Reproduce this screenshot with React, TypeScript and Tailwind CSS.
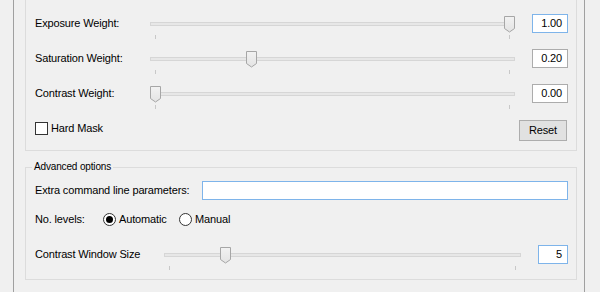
export default function App() {
  return (
    <div className="w-[600px] h-[292px] overflow-hidden bg-[#f0f0f0] font-['Liberation_Sans',Arial,sans-serif] text-[11px] tracking-[-0.15px] text-black">
      <div className="ml-[13px] w-[572px] h-full border-x border-[#a0a0a0] pl-[11px] pr-[7px]">
        {/* blending weights group, top edge scrolled out of view */}
        <div className="border-x border-b border-[#dcdcdc] pl-[9px] pr-[8px] pt-[14px] pb-[9px]">
          <WeightRow label="Exposure Weight:" value="1.00" left={354} focused />
          <WeightRow label="Saturation Weight:" value="0.20" left={96} />
          <WeightRow label="Contrast Weight:" value="0.00" left={0} />
          <div className="flex items-start h-[22px]">
            <div className="flex items-center mt-[3px]">
              <div className="w-[13px] h-[13px] border border-[#333333] bg-white" />
              <span className="ml-[3px] leading-[13px]">Hard Mask</span>
            </div>
            <button className="ml-auto mr-[1px] mt-[1px] w-[48px] h-[21px] border border-[#adadad] bg-[#e1e1e1] leading-[19px] text-center">
              Reset
            </button>
          </div>
        </div>

        <div className="relative mt-[16px] border border-[#dcdcdc] pl-[9px] pr-[8px] pt-[13px] pb-[15px]">
          <span className="absolute -top-[8px] left-[6px] px-[2px] bg-[#f0f0f0] text-[10px] leading-[13px]">
            Advanced options
          </span>

          <div className="flex items-center h-[19px]">
            <span className="w-[167px] leading-[19px]">Extra command line parameters:</span>
            <div className="flex-1 h-[19px] border border-[#7eb4ea] bg-white" />
          </div>

          <div className="flex items-center h-[19px] mt-[10px]">
            <span className="w-[68px] leading-[19px]">No. levels:</span>
            <div className="flex items-center w-[76px]">
              <Radio checked />
              <span className="ml-[3px]">Automatic</span>
            </div>
            <div className="flex items-center">
              <Radio />
              <span className="ml-[3px]">Manual</span>
            </div>
          </div>

          <div className="flex items-start h-[19px] mt-[16px]">
            <span className="w-[129px] leading-[19px]">Contrast Window Size</span>
            <Slider className="w-[357px]" left={56} />
            <SpinBox value="5" className="ml-[17px] w-[30px]" focused />
          </div>
        </div>
      </div>
    </div>
  );
}

function WeightRow({ label, value, left, focused }: any) {
  return (
    <div className="flex items-start h-[35px]">
      <span className="w-[115px] leading-[19px]">{label}</span>
      <Slider className="w-[365px]" left={left} />
      <SpinBox value={value} className="ml-[17px] w-[36px]" focused={focused} />
    </div>
  );
}

function SpinBox({ value, className, focused }: any) {
  return (
    <div
      className={
        "h-[19px] bg-white border text-right pr-[5px] leading-[17px] " +
        (focused ? "border-[#7eb4ea] " : "border-[#acacac] ") +
        className
      }
    >
      {value}
    </div>
  );
}

function Slider({ className, left }: any) {
  return (
    <div className={"relative mt-[2px] h-[24px] " + className}>
      <div className="mt-[6px] h-[4px] border border-[#d6d6d6] bg-[#e7e7e7]" />
      <div className="mt-[9px] flex justify-between px-[5px]">
        <div className="w-[1px] h-[4px] bg-[#c8c8c8]" />
        <div className="w-[1px] h-[4px] bg-[#c8c8c8]" />
      </div>
      <svg className="absolute top-0" style={{ left }} width="11" height="17" viewBox="0 0 11 17">
        <defs>
          <linearGradient id="hg" x1="0" y1="0" x2="0" y2="1">
            <stop offset="0" stopColor="#f2f2f2" />
            <stop offset="1" stopColor="#e3e3e3" />
          </linearGradient>
        </defs>
        <path d="M0.5 0.5 H10.5 V12.5 L5.5 16 L0.5 12.5 Z" fill="url(#hg)" stroke="#a6a6a6" />
      </svg>
    </div>
  );
}

function Radio({ checked }: any) {
  return (
    <div className="w-[13px] h-[13px] rounded-full border border-[#333333] bg-white flex items-center justify-center">
      {checked && <div className="w-[7px] h-[7px] rounded-full bg-black" />}
    </div>
  );
}
